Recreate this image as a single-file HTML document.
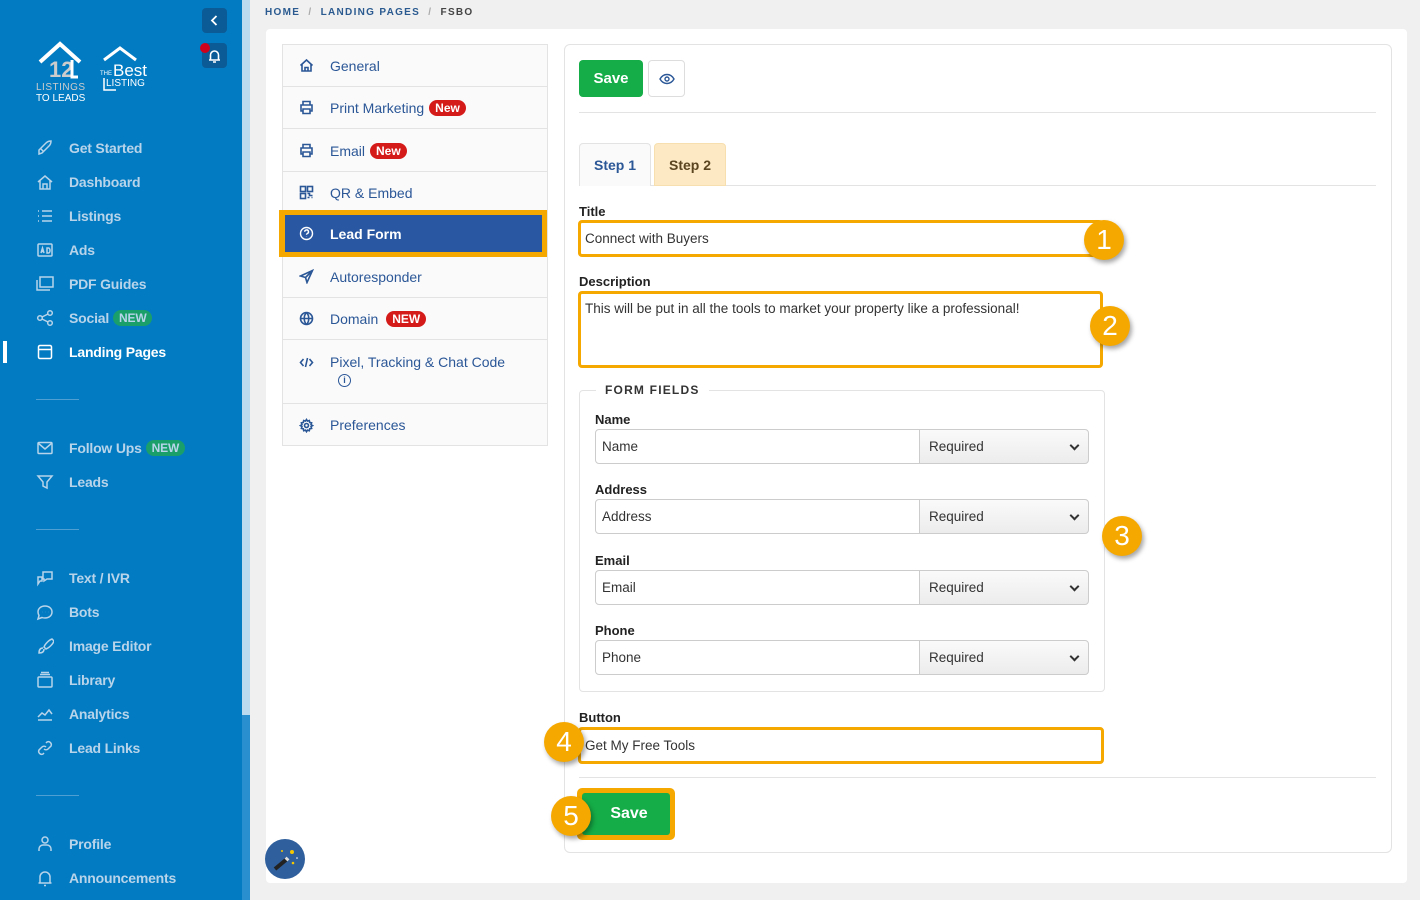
<!DOCTYPE html>
<html><head><meta charset="utf-8"><style>
*{box-sizing:border-box;margin:0;padding:0}
body{width:1420px;height:900px;overflow:hidden;background:#f0f0f0;font-family:"Liberation Sans",sans-serif;position:relative;color:#222}
.abs{position:absolute}
#sb{left:0;top:0;width:242px;height:900px;background:#037bc2}
#sbar{left:242px;top:0;width:8px;height:900px;background:#2a8fcf}
#sbar2{left:242px;top:0;width:8px;height:715px;background:#bcdaef}
.nav{position:absolute;left:36px;color:#b8d4ea;font-weight:bold;font-size:14px;display:flex;align-items:center;height:20px;letter-spacing:-.2px}
.nav svg{width:18px;height:18px;margin-right:15px;stroke:#b8d4ea;fill:none;stroke-width:1.5}
.nav.act{color:#fff}.nav.act svg{stroke:#fff}
.gnew{background:#1a9f6a;color:#b8d4ea;font-size:12px;border-radius:10px;padding:1px 6px;margin-left:4px}
.sep{position:absolute;left:36px;width:43px;height:1px;background:#4f9fd2}
.bc{top:7px;left:265px;font-size:10px;letter-spacing:1.3px;font-weight:bold;color:#2a5a90}
#card{left:266px;top:29px;width:1141px;height:854px;background:#fff;border-radius:4px}
#lnav{left:282px;top:44px;width:266px;height:402px;background:#fafafa;border:1px solid #e3e3e3}
.li{position:absolute;left:0;width:264px;height:42px;border-bottom:1px solid #e3e3e3;display:flex;align-items:center;padding-left:16px;color:#2b5797;font-size:14px}
.li svg{width:15px;height:15px;margin-right:16px;stroke:#2b5797;fill:none;stroke-width:1.6;flex:none}
.rnew{background:#d51a1a;color:#fff;font-weight:bold;font-size:12px;border-radius:10px;padding:1px 6px;margin-left:5px}
#rp{left:564px;top:44px;width:828px;height:809px;border:1px solid #e3e3e3;border-radius:6px;background:#fff}
.lbl{position:absolute;font-weight:bold;font-size:13px;color:#222}
.inp{position:absolute;border:1px solid #ccc;border-radius:3px;font-size:13.5px;color:#333;padding-left:6px;display:flex;align-items:center;background:#fff}
.ob{border:3px solid #f5a800;border-radius:4px}
.num{position:absolute;width:40px;height:40px;border-radius:50%;background:#f5a800;color:#fff;font-size:28px;display:flex;align-items:center;justify-content:center;box-shadow:2px 3px 5px rgba(0,0,0,.35)}
.sel{position:absolute;border:1px solid #ccc;border-radius:0 4px 4px 0;background:linear-gradient(#fafafa,#ececec);font-size:13.5px;color:#333;padding-left:9px;display:flex;align-items:center}
.sel:after{content:"";position:absolute;right:10px;top:12px;width:5px;height:5px;border-right:2px solid #333;border-bottom:2px solid #333;transform:rotate(45deg)}
</style></head><body>
<div id="sb" class="abs"></div>
<div id="sbar" class="abs"></div><div id="sbar2" class="abs"></div>
<div class="abs" style="left:202px;top:8px;width:25px;height:25px;background:#0b5c96;border-radius:4px"><svg width="25" height="25" viewBox="0 0 25 25"><path d="M14.5 8l-4.5 4.5 4.5 4.5" stroke="#fff" stroke-width="1.8" fill="none"/></svg></div>
<div class="abs" style="left:202px;top:43px;width:25px;height:25px;background:#0b5c96;border-radius:4px"><svg width="25" height="25" viewBox="0 0 25 25"><path d="M7 17h11M8.5 17v-5a4 4 0 0 1 8 0v5M11 19h3" stroke="#fff" stroke-width="1.6" fill="none"/></svg></div>
<div class="abs" style="left:200px;top:43px;width:10px;height:10px;border-radius:50%;background:#d0021b"></div>
<svg class="abs" style="left:36px;top:40px" width="120" height="62" viewBox="0 0 120 62"><path d="M4 22 L24 4 L44 22" stroke="#fff" stroke-width="4" fill="none"/><text x="13" y="37" font-size="22" fill="#ccc" font-family="Liberation Sans" font-weight="bold">12</text><path d="M36 20v17h6" stroke="#fff" stroke-width="3" fill="none"/><text x="0" y="50" font-size="10" fill="#ccc" font-family="Liberation Sans" letter-spacing=".5">LISTINGS</text><text x="0" y="61" font-size="10" fill="#fff" font-family="Liberation Sans">TO LEADS</text><path d="M68 20 L84 8 L100 20" stroke="#fff" stroke-width="3" fill="none"/><text x="64" y="35" font-size="6" fill="#fff" font-family="Liberation Sans">THE</text><text x="77" y="36" font-size="17" fill="#fff" font-family="Liberation Sans">Best</text><text x="70" y="46" font-size="10" fill="#fff" font-family="Liberation Sans">LISTING</text><path d="M68 38v12h12" stroke="#fff" stroke-width="1.5" fill="none"/></svg>

<div class="nav" style="top:138px"><svg viewBox="0 0 18 18"><path d="M3 15l3-1 7-7c2-2 2-4 2-5-1 0-3 0-5 2L3 11zM5 10l3 3M11 6h.1"/></svg>Get Started</div>
<div class="nav" style="top:172px"><svg viewBox="0 0 18 18"><path d="M2 9l7-6 7 6M4 7.5V16h10V7.5M7 16v-5h4v5"/></svg>Dashboard</div>
<div class="nav" style="top:206px"><svg viewBox="0 0 18 18"><path d="M6 4h10M6 9h10M6 14h10M2 4h1M2 9h1M2 14h1"/></svg>Listings</div>
<div class="nav" style="top:240px"><svg viewBox="0 0 18 18"><rect x="2" y="3" width="14" height="12" rx="1"/><path d="M5 12l1.5-5 1.5 5M5.5 10.5h2M11 7v5h1.5a1.5 2.5 0 0 0 0-5z"/></svg>Ads</div>
<div class="nav" style="top:274px"><svg viewBox="0 0 18 18"><rect x="4" y="2" width="13" height="10"/><path d="M1 5v10h13"/></svg>PDF Guides</div>
<div class="nav" style="top:308px"><svg viewBox="0 0 18 18"><circle cx="4" cy="9" r="2.3"/><circle cx="14" cy="4" r="2.3"/><circle cx="14" cy="14" r="2.3"/><path d="M6 8l6-3M6 10l6 3"/></svg>Social<span class="gnew">NEW</span></div>
<div class="abs" style="left:3px;top:341px;width:4px;height:22px;background:#fff"></div>
<div class="nav act" style="top:342px"><svg viewBox="0 0 18 18"><rect x="2.5" y="2.5" width="13" height="13" rx="1.5"/><path d="M2.5 6.5h13"/></svg>Landing Pages</div>
<div class="sep" style="top:399px"></div>
<div class="nav" style="top:438px"><svg viewBox="0 0 18 18"><rect x="2" y="3.5" width="14" height="11" rx="1"/><path d="M2 4l7 6 7-6"/></svg>Follow Ups<span class="gnew">NEW</span></div>
<div class="nav" style="top:472px"><svg viewBox="0 0 18 18"><path d="M2 3h14l-5 6v6l-4-2V9z"/></svg>Leads</div>
<div class="sep" style="top:529px"></div>
<div class="nav" style="top:568px"><svg viewBox="0 0 18 18"><path d="M7 3h9v7H11l-3 2V10H7zM2 8h4v4H4l-2 3z"/></svg>Text / IVR</div>
<div class="nav" style="top:602px"><svg viewBox="0 0 18 18"><path d="M9 3c4 0 7 2.5 7 6s-3 6-7 6c-1 0-2 0-3-.5L2 16l1-3.5C2.5 11.5 2 10.3 2 9c0-3.5 3-6 7-6z"/><path d="M6 9h.1M9 9h.1M12 9h.1"/></svg>Bots</div>
<div class="nav" style="top:636px"><svg viewBox="0 0 18 18"><path d="M16 2c-3 1-7 5-8 8l2 2c3-1 7-5 8-8zM7 11c-3 0-4 2-4 5 3 0 5-1 5-4"/></svg>Image Editor</div>
<div class="nav" style="top:670px"><svg viewBox="0 0 18 18"><rect x="2" y="6" width="14" height="10" rx="1"/><path d="M4 3.5h10M5 1.5h8"/></svg>Library</div>
<div class="nav" style="top:704px"><svg viewBox="0 0 18 18"><path d="M2 15h14M2 12l4-4 3 2 4-5 3 4"/></svg>Analytics</div>
<div class="nav" style="top:738px"><svg viewBox="0 0 18 18"><path d="M8 10a3 3 0 0 0 4 0l3-3a3 3 0 0 0-4-4l-1 1M10 8a3 3 0 0 0-4 0l-3 3a3 3 0 0 0 4 4l1-1"/></svg>Lead Links</div>
<div class="sep" style="top:795px"></div>
<div class="nav" style="top:834px"><svg viewBox="0 0 18 18"><circle cx="9" cy="5" r="3"/><path d="M3 16v-2a4 4 0 0 1 4-4h4a4 4 0 0 1 4 4v2"/></svg>Profile</div>
<div class="nav" style="top:868px"><svg viewBox="0 0 18 18"><path d="M4 14V8a5 5 0 0 1 10 0v6M2.5 14h13M8 16.5h2"/></svg>Announcements</div>

<div class="abs bc">HOME &nbsp;<span style="color:#aaa">/</span>&nbsp; LANDING PAGES &nbsp;<span style="color:#aaa">/</span>&nbsp; <span style="color:#444">FSBO</span></div>
<div id="card" class="abs"></div>

<div id="lnav" class="abs">
<div class="li" style="top:0"><svg viewBox="0 0 15 15"><path d="M1.5 7.5L7.5 2l6 5.5M3 6.5V13h9V6.5M6 13V9.5h3V13"/></svg>General</div>
<div class="li" style="top:42px"><svg viewBox="0 0 15 15"><path d="M4 5V1.5h7V5M4 11H2V5h11v6h-2M4 9h7v4.5H4z"/></svg>Print Marketing<span class="rnew">New</span></div>
<div class="li" style="top:85px"><svg viewBox="0 0 15 15"><path d="M4 5V1.5h7V5M4 11H2V5h11v6h-2M4 9h7v4.5H4z"/></svg>Email<span class="rnew">New</span></div>
<div class="li" style="top:127px"><svg viewBox="0 0 15 15"><rect x="1.5" y="1.5" width="5" height="5"/><rect x="8.5" y="1.5" width="5" height="5"/><rect x="1.5" y="8.5" width="5" height="5"/><path d="M8.5 8.5h2v2h3M8.5 12.5h2M12.5 12.5h1"/></svg>QR &amp; Embed</div>
<div class="li" style="top:211px"><svg viewBox="0 0 15 15"><path d="M1.5 7L13.5 1.5 8 13.5 6.5 8.5zM6.5 8.5l7-7"/></svg>Autoresponder</div>
<div class="li" style="top:253px"><svg viewBox="0 0 15 15"><circle cx="7.5" cy="7.5" r="6"/><path d="M1.5 7.5h12M7.5 1.5c-3 3-3 9 0 12M7.5 1.5c3 3 3 9 0 12"/></svg>Domain<span class="rnew" style="margin-left:8px">NEW</span></div>
<div class="li" style="top:296px;height:63px;align-items:flex-start;padding-top:13px"><svg viewBox="0 0 15 15" style="margin-top:1px"><path d="M4.5 4L1.5 7.5 4.5 11M10.5 4l3 3.5-3 3.5M8.5 3l-2 9"/></svg><div>Pixel, Tracking &amp; Chat Code<br><span style="display:inline-block;margin:4px 0 0 8px;width:13px;height:13px;border:1.3px solid #2b5797;border-radius:50%;font-size:9px;text-align:center;line-height:11px;font-weight:bold">i</span></div></div>
<div class="li" style="top:359px;border:none"><svg viewBox="0 0 15 15"><circle cx="7.5" cy="7.5" r="2"/><path d="M7.5 1.5l1 1.6 1.8-.6.4 1.9 1.9.4-.6 1.8 1.6 1-1.6 1 .6 1.8-1.9.4-.4 1.9-1.8-.6-1 1.6-1-1.6-1.8.6-.4-1.9-1.9-.4.6-1.8-1.6-1 1.6-1-.6-1.8 1.9-.4.4-1.9 1.8.6z"/></svg>Preferences</div>
</div>
<div class="abs" style="left:279px;top:210px;width:268px;height:47px;background:#f5a800"></div>
<div class="abs" style="left:285px;top:215px;width:257px;height:37px;background:#2a57a1;color:#fff;font-weight:bold;font-size:14px;display:flex;align-items:center;padding-left:14px"><svg width="15" height="15" viewBox="0 0 15 15" style="margin-right:16px"><circle cx="7.5" cy="7.5" r="6" stroke="#fff" fill="none" stroke-width="1.4"/><path d="M5.7 5.8a1.9 1.9 0 1 1 2.5 1.8c-.5.2-.7.6-.7 1.2M7.5 10.8v.2" stroke="#fff" fill="none" stroke-width="1.4"/></svg>Lead Form</div>

<div id="rp" class="abs"></div>
<div class="abs" style="left:579px;top:60px;width:64px;height:37px;background:#15ad47;border-radius:4px;color:#fff;font-weight:bold;font-size:15px;display:flex;align-items:center;justify-content:center">Save</div>
<div class="abs" style="left:648px;top:60px;width:37px;height:37px;border:1px solid #ddd;border-radius:4px;display:flex;align-items:center;justify-content:center"><svg width="16" height="12" viewBox="0 0 16 12"><path d="M1 6c2-3.5 4-4.5 7-4.5s5 1 7 4.5c-2 3.5-4 4.5-7 4.5S3 9.5 1 6z" stroke="#2b5797" fill="none" stroke-width="1.4"/><circle cx="8" cy="6" r="2" stroke="#2b5797" fill="none" stroke-width="1.4"/></svg></div>
<div class="abs" style="left:579px;top:112px;width:797px;height:1px;background:#e3e3e3"></div>
<div class="abs" style="left:579px;top:185px;width:797px;height:1px;background:#e3e3e3"></div>
<div class="abs" style="left:579px;top:143px;width:72px;height:43px;border:1px solid #e3e3e3;border-bottom:none;border-radius:4px 4px 0 0;background:#fafafa;color:#2b5797;font-weight:bold;font-size:14px;display:flex;align-items:center;justify-content:center">Step 1</div>
<div class="abs" style="left:654px;top:143px;width:72px;height:43px;border:1px solid #f7dfb0;border-radius:4px 4px 0 0;background:#fde9c3;color:#5a4520;font-weight:bold;font-size:14px;display:flex;align-items:center;justify-content:center">Step 2</div>

<div class="lbl" style="left:579px;top:204px">Title</div>
<div class="inp ob" style="left:578px;top:220px;width:525px;height:37px;padding-left:4px">Connect with Buyers</div>
<div class="num" style="left:1084px;top:220px">1</div>
<div class="lbl" style="left:579px;top:274px">Description</div>
<div class="inp ob" style="left:578px;top:291px;width:525px;height:77px;align-items:flex-start;padding-top:7px;padding-left:4px">This will be put in all the tools to market your property like a professional!</div>
<div class="num" style="left:1090px;top:306px">2</div>

<div class="abs" style="left:579px;top:390px;width:526px;height:302px;border:1px solid #e3e3e3;border-radius:4px"></div>
<div class="abs" style="left:596px;top:383px;background:#fff;padding:0 9px;font-size:12px;font-weight:bold;letter-spacing:1.2px;color:#333">FORM FIELDS</div>
<div class="lbl" style="left:595px;top:412px">Name</div>
<div class="inp" style="left:595px;top:429px;width:325px;height:35px;border-radius:4px 0 0 4px">Name</div>
<div class="sel" style="left:919px;top:429px;width:170px;height:35px">Required</div>
<div class="lbl" style="left:595px;top:482px">Address</div>
<div class="inp" style="left:595px;top:499px;width:325px;height:35px;border-radius:4px 0 0 4px">Address</div>
<div class="sel" style="left:919px;top:499px;width:170px;height:35px">Required</div>
<div class="lbl" style="left:595px;top:553px">Email</div>
<div class="inp" style="left:595px;top:570px;width:325px;height:35px;border-radius:4px 0 0 4px">Email</div>
<div class="sel" style="left:919px;top:570px;width:170px;height:35px">Required</div>
<div class="lbl" style="left:595px;top:623px">Phone</div>
<div class="inp" style="left:595px;top:640px;width:325px;height:35px;border-radius:4px 0 0 4px">Phone</div>
<div class="sel" style="left:919px;top:640px;width:170px;height:35px">Required</div>
<div class="num" style="left:1102px;top:516px">3</div>

<div class="lbl" style="left:579px;top:710px">Button</div>
<div class="inp ob" style="left:578px;top:727px;width:526px;height:37px;padding-left:4px">Get My Free Tools</div>
<div class="num" style="left:544px;top:722px">4</div>
<div class="abs" style="left:579px;top:777px;width:797px;height:1px;background:#e3e3e3"></div>
<div class="abs" style="left:577px;top:788px;width:98px;height:52px;background:#f5a800;border-radius:5px"></div>
<div class="abs" style="left:582px;top:793px;width:88px;height:42px;background:#15ad47;border-radius:3px;color:#fff;font-weight:bold;font-size:16px;display:flex;align-items:center;justify-content:center;padding-left:6px">Save</div>
<div class="num" style="left:551px;top:796px">5</div>

<div class="abs" style="left:265px;top:839px;width:40px;height:40px;border-radius:50%;background:#2f5f9c"><svg width="40" height="40" viewBox="0 0 40 40"><path d="M10 30l12-10" stroke="#222" stroke-width="4"/><path d="M21 21l2-2" stroke="#ddd" stroke-width="4"/><circle cx="27" cy="13" r="2" fill="#f5c800"/><circle cx="17" cy="12" r="1" fill="#f5c800"/><circle cx="28" cy="24" r="1.3" fill="#f5c800"/><circle cx="32" cy="19" r=".8" fill="#fff"/></svg></div>
</body></html>
